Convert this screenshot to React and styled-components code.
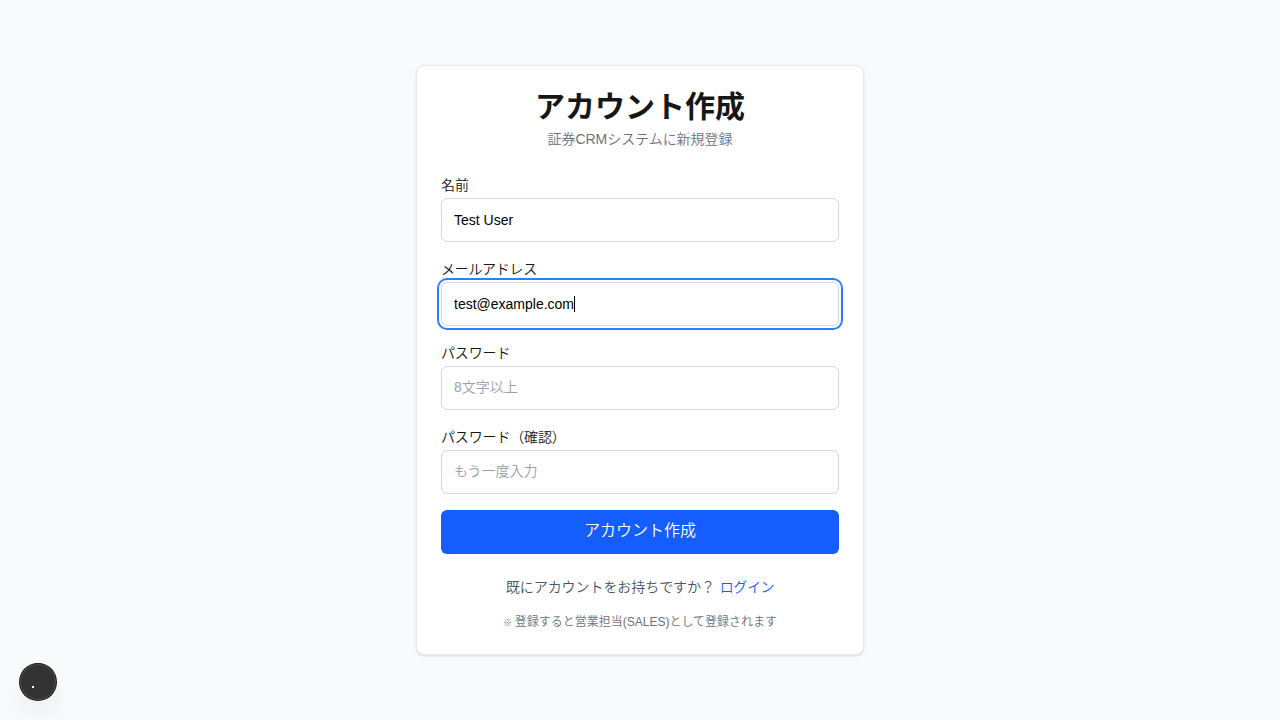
import React from "react";
import styled, { createGlobalStyle, css } from "styled-components";

const GlobalStyle = createGlobalStyle`
  *, *::before, *::after { box-sizing: border-box; }
  body {
    margin: 0;
    background: #f9fafb;
    color: #171717;
    font-family: "Liberation Sans", "Noto Sans CJK JP", sans-serif;
    font-weight: 350;
  }
  h1, p { margin: 0; }
`;

const Page = styled.main`
  min-height: 100vh;
  display: flex;
  align-items: center;
  justify-content: center;
`;

const Card = styled.section`
  width: 448px;
  height: 590px;
  padding: 24px;
  background: #fff;
  border: 1px solid #e5e7eb;
  border-radius: 8px;
  box-shadow: 0 1px 3px rgba(0, 0, 0, 0.1), 0 1px 2px -1px rgba(0, 0, 0, 0.1);
`;

const Header = styled.header`
  padding-bottom: 24px;
  text-align: center;
`;

const Title = styled.h1`
  height: 36px;
  font-size: 30px;
  line-height: 34px;
  font-weight: 700;
`;

const Subtitle = styled.p`
  margin-top: 4px;
  height: 20px;
  font-size: 14px;
  line-height: 18px;
  letter-spacing: -0.04px;
  color: #6a7282;
`;

const Form = styled.form`
  display: flex;
  flex-direction: column;
  gap: 16px;
`;

const Field = styled.div`
  display: flex;
  flex-direction: column;
  height: 68px;
`;

const Label = styled.label`
  height: 24px;
  font-size: 14px;
  line-height: 22px;
  letter-spacing: ${({ $tracking }) => $tracking || "normal"};
`;

const controlStyle = css`
  width: 100%;
  height: 44px;
  flex: none;
  padding: 0 12px;
  border: 1px solid #d1d5dc;
  border-radius: 6px;
  background: #fff;
  color: #000;
  font-family: inherit;
  font-weight: inherit;
  font-size: 14px;
`;

const Input = styled.input`
  ${controlStyle}
  outline: none;
  &::placeholder { color: #99a1af; opacity: 1; }
  &:placeholder-shown { padding-bottom: 2px; }
`;

const ActiveInput = styled.div`
  ${controlStyle}
  display: flex;
  align-items: center;
  box-shadow: 0 0 0 2px #fff, 0 0 0 4px #2b7fff;
`;

const Caret = styled.span`
  width: 1px;
  height: 16px;
  background: #000;
`;

const Submit = styled.button`
  height: 44px;
  padding: 0 0 6px;
  border: 0;
  border-radius: 6px;
  background: #155dfc;
  color: #fff;
  font-family: inherit;
  font-weight: inherit;
  font-size: 16px;
`;

const LoginPrompt = styled.p`
  margin-top: 23px;
  font-size: 14px;
  line-height: 20px;
  letter-spacing: -0.06px;
  text-align: center;
  color: #4a5565;
`;

const Link = styled.a`
  margin-left: 1px;
  letter-spacing: -0.4px;
  color: #155dfc;
`;

const Note = styled.p`
  margin-top: 17px;
  font-size: 12px;
  line-height: 16px;
  text-align: center;
  color: #6a7282;
`;

const NoteMark = styled.span`
  font-size: 9px;
  font-weight: 700;
  letter-spacing: -0.5px;
`;

const DevBadge = styled.div`
  position: fixed;
  left: 20px;
  bottom: 20px;
  width: 36px;
  height: 36px;
  border-radius: 50%;
  background: #333;
  box-shadow: 0 0 0 1px #171717, inset 0 0 0 1px rgba(255, 255, 255, 0.14),
    0 16px 32px -8px rgba(0, 0, 0, 0.16);
`;

const BadgeDot = styled.span`
  position: absolute;
  left: 12px;
  top: 22px;
  width: 2px;
  height: 2px;
  background: #fff;
`;

export default function App() {
  return (
    <Page>
      <GlobalStyle />
      <Card>
        <Header>
          <Title>アカウント作成</Title>
          <Subtitle>証券CRMシステムに新規登録</Subtitle>
        </Header>
        <Form>
          <Field>
            <Label htmlFor="name">名前</Label>
            <Input id="name" defaultValue="Test User" />
          </Field>
          <Field>
            <Label $tracking="-0.3px">メールアドレス</Label>
            <ActiveInput role="textbox">
              test@example.com
              <Caret />
            </ActiveInput>
          </Field>
          <Field>
            <Label htmlFor="password" $tracking="-0.15px">パスワード</Label>
            <Input id="password" type="password" placeholder="8文字以上" />
          </Field>
          <Field>
            <Label htmlFor="confirm" $tracking="-0.15px">パスワード（確認）</Label>
            <Input id="confirm" type="password" placeholder="もう一度入力" />
          </Field>
          <Submit type="button">アカウント作成</Submit>
        </Form>
        <LoginPrompt>
          既にアカウントをお持ちですか？ <Link>ログイン</Link>
        </LoginPrompt>
        <Note><NoteMark>※</NoteMark> 登録すると営業担当(SALES)として登録されます</Note>
      </Card>
      <DevBadge>
        <BadgeDot />
      </DevBadge>
    </Page>
  );
}
